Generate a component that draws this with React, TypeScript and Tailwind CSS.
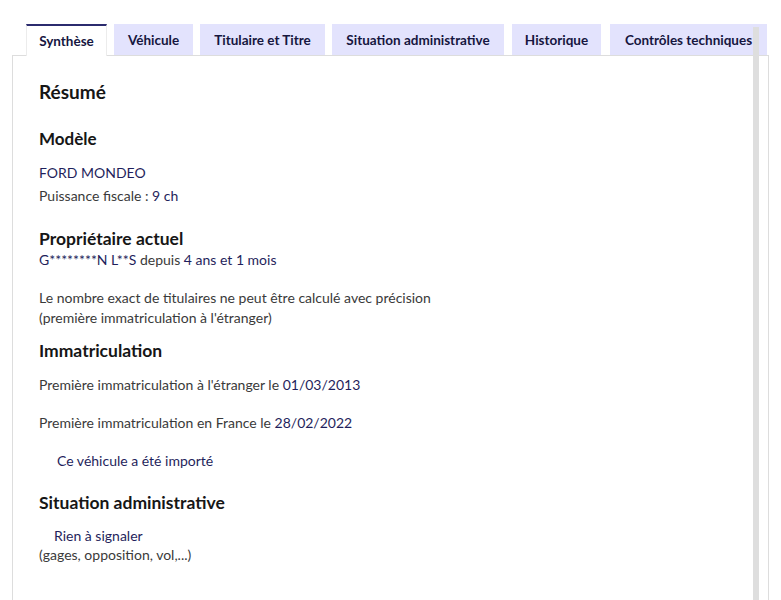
import React from "react";

const tabs = [
  { label: "Synthèse", w: "w-[81px]", extra: "" },
  { label: "Véhicule", w: "w-[79px]", extra: "" },
  { label: "Titulaire et Titre", w: "w-[125px]", extra: "" },
  { label: "Situation administrative", w: "w-[172px]", extra: "" },
  { label: "Historique", w: "w-[89px]", extra: "ml-px" },
  { label: "Contrôles techniques", w: "w-[157px]", extra: "ml-[2px]" },
];

const Value: React.FC<{ children: React.ReactNode }> = ({ children }) => (
  <span className="text-[#1f1f5c]">{children}</span>
);

const App: React.FC = () => {
  return (
    <div
      className="relative w-[781px] h-[600px] overflow-hidden bg-white"
      style={{ fontFamily: "Lato, 'Noto Sans', sans-serif" }}
    >
      <div className="pt-6 pl-3 w-[769px]">
        {/* Tabs */}
        <div className="flex gap-[7px] pl-[14px] h-[31px]">
          {tabs.map((t, i) => (
            <div
              key={t.label}
              className={`${t.w} ${t.extra} shrink-0 flex items-center justify-center whitespace-nowrap text-[13.5px] font-bold text-[#161640] pt-px ${
                i === 0
                  ? "bg-white border-t-2 border-[#2b2b6e] border-x border-x-[#ececec] relative z-10 -mb-px"
                  : "bg-[#e3e3fd]"
              }`}
            >
              {t.label}
            </div>
          ))}
        </div>

        {/* Panel */}
        <div className="border-l border-t border-r border-[#dddddd] h-[600px] pl-[26px] pt-6 text-[14px] text-[#3a3a3a]">
          <h2 className="text-[19px] font-bold text-[#161616] leading-6">Résumé</h2>

          <h3 className="mt-[23px] text-[17px] font-bold text-[#161616] leading-6">Modèle</h3>
          <p className="mt-[12px] leading-5">
            <Value>FORD MONDEO</Value>
          </p>
          <p className="mt-[3px] leading-5">
            Puissance fiscale : <Value>9 ch</Value>
          </p>

          <h3 className="mt-[21px] text-[17.5px] font-bold text-[#161616] leading-6">Propriétaire actuel</h3>
          <p className="-mt-px leading-5">
            <Value>G********N L**S</Value> depuis <Value>4 ans et 1 mois</Value>
          </p>
          <p className="mt-[18px] leading-5">
            Le nombre exact de titulaires ne peut être calculé avec précision
            <br />
            (première immatriculation à l'étranger)
          </p>

          <h3 className="mt-[11px] text-[17.5px] font-bold text-[#161616] leading-6">Immatriculation</h3>
          <p className="mt-[12px] leading-5">
            Première immatriculation à l'étranger le <Value>01/03/2013</Value>
          </p>
          <p className="mt-[18px] leading-5">
            Première immatriculation en France le <Value>28/02/2022</Value>
          </p>
          <p className="mt-[18px] pl-[18px] leading-5">
            <Value>Ce véhicule a été importé</Value>
          </p>

          <h3 className="mt-[20px] text-[17.5px] font-bold text-[#161616] leading-6">Situation administrative</h3>
          <p className="mt-[11px] pl-[15px] leading-5">
            <Value>Rien à signaler</Value>
          </p>
          <p className="-mt-px leading-5">(gages, opposition, vol,...)</p>
        </div>
      </div>

      {/* scrollbar-like bar overlaying the right edge */}
      <div className="absolute left-[753px] top-[27px] w-[6px] h-[600px] bg-[#dedede]" />
    </div>
  );
};

export default App;
